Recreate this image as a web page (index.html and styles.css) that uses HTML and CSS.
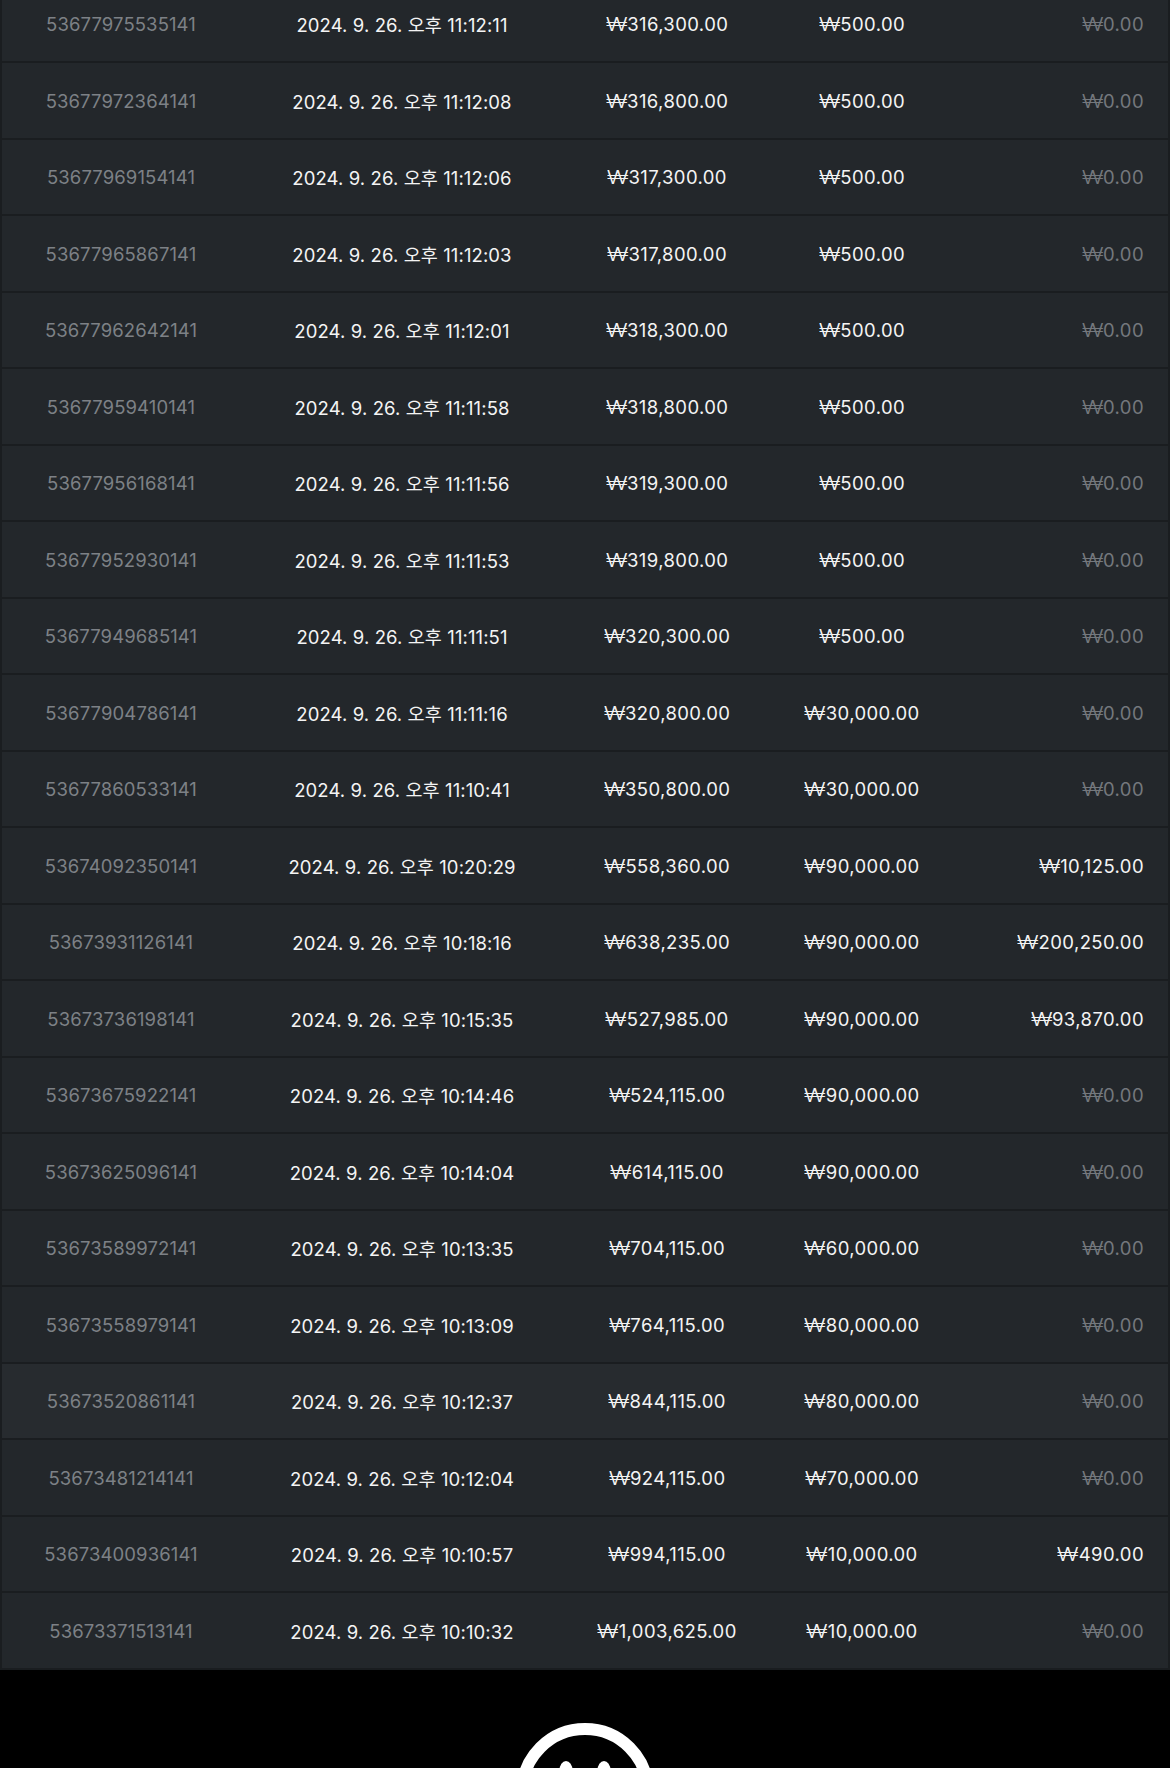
FILE: index.html
```html
<!DOCTYPE html>
<html lang="ko">
<head>
<meta charset="utf-8">
<title>Transactions</title>
<link rel="stylesheet" href="styles.css">
</head>
<body>
<main class="page">
  <section class="table">
    <div class="row"><span class="c id">53677975535141</span><span class="c date">2024. 9. 26. 오후 11:12:11</span><span class="c amt"><span class="won">₩</span>316,300.00</span><span class="c amt"><span class="won">₩</span>500.00</span><span class="c amt end zero"><span class="won">₩</span>0.00</span></div>
    <div class="row"><span class="c id">53677972364141</span><span class="c date">2024. 9. 26. 오후 11:12:08</span><span class="c amt"><span class="won">₩</span>316,800.00</span><span class="c amt"><span class="won">₩</span>500.00</span><span class="c amt end zero"><span class="won">₩</span>0.00</span></div>
    <div class="row"><span class="c id">53677969154141</span><span class="c date">2024. 9. 26. 오후 11:12:06</span><span class="c amt"><span class="won">₩</span>317,300.00</span><span class="c amt"><span class="won">₩</span>500.00</span><span class="c amt end zero"><span class="won">₩</span>0.00</span></div>
    <div class="row"><span class="c id">53677965867141</span><span class="c date">2024. 9. 26. 오후 11:12:03</span><span class="c amt"><span class="won">₩</span>317,800.00</span><span class="c amt"><span class="won">₩</span>500.00</span><span class="c amt end zero"><span class="won">₩</span>0.00</span></div>
    <div class="row"><span class="c id">53677962642141</span><span class="c date">2024. 9. 26. 오후 11:12:01</span><span class="c amt"><span class="won">₩</span>318,300.00</span><span class="c amt"><span class="won">₩</span>500.00</span><span class="c amt end zero"><span class="won">₩</span>0.00</span></div>
    <div class="row"><span class="c id">53677959410141</span><span class="c date">2024. 9. 26. 오후 11:11:58</span><span class="c amt"><span class="won">₩</span>318,800.00</span><span class="c amt"><span class="won">₩</span>500.00</span><span class="c amt end zero"><span class="won">₩</span>0.00</span></div>
    <div class="row"><span class="c id">53677956168141</span><span class="c date">2024. 9. 26. 오후 11:11:56</span><span class="c amt"><span class="won">₩</span>319,300.00</span><span class="c amt"><span class="won">₩</span>500.00</span><span class="c amt end zero"><span class="won">₩</span>0.00</span></div>
    <div class="row"><span class="c id">53677952930141</span><span class="c date">2024. 9. 26. 오후 11:11:53</span><span class="c amt"><span class="won">₩</span>319,800.00</span><span class="c amt"><span class="won">₩</span>500.00</span><span class="c amt end zero"><span class="won">₩</span>0.00</span></div>
    <div class="row"><span class="c id">53677949685141</span><span class="c date">2024. 9. 26. 오후 11:11:51</span><span class="c amt"><span class="won">₩</span>320,300.00</span><span class="c amt"><span class="won">₩</span>500.00</span><span class="c amt end zero"><span class="won">₩</span>0.00</span></div>
    <div class="row"><span class="c id">53677904786141</span><span class="c date">2024. 9. 26. 오후 11:11:16</span><span class="c amt"><span class="won">₩</span>320,800.00</span><span class="c amt"><span class="won">₩</span>30,000.00</span><span class="c amt end zero"><span class="won">₩</span>0.00</span></div>
    <div class="row"><span class="c id">53677860533141</span><span class="c date">2024. 9. 26. 오후 11:10:41</span><span class="c amt"><span class="won">₩</span>350,800.00</span><span class="c amt"><span class="won">₩</span>30,000.00</span><span class="c amt end zero"><span class="won">₩</span>0.00</span></div>
    <div class="row"><span class="c id">53674092350141</span><span class="c date">2024. 9. 26. 오후 10:20:29</span><span class="c amt"><span class="won">₩</span>558,360.00</span><span class="c amt"><span class="won">₩</span>90,000.00</span><span class="c amt end"><span class="won">₩</span>10,125.00</span></div>
    <div class="row"><span class="c id">53673931126141</span><span class="c date">2024. 9. 26. 오후 10:18:16</span><span class="c amt"><span class="won">₩</span>638,235.00</span><span class="c amt"><span class="won">₩</span>90,000.00</span><span class="c amt end"><span class="won">₩</span>200,250.00</span></div>
    <div class="row"><span class="c id">53673736198141</span><span class="c date">2024. 9. 26. 오후 10:15:35</span><span class="c amt"><span class="won">₩</span>527,985.00</span><span class="c amt"><span class="won">₩</span>90,000.00</span><span class="c amt end"><span class="won">₩</span>93,870.00</span></div>
    <div class="row"><span class="c id">53673675922141</span><span class="c date">2024. 9. 26. 오후 10:14:46</span><span class="c amt"><span class="won">₩</span>524,115.00</span><span class="c amt"><span class="won">₩</span>90,000.00</span><span class="c amt end zero"><span class="won">₩</span>0.00</span></div>
    <div class="row"><span class="c id">53673625096141</span><span class="c date">2024. 9. 26. 오후 10:14:04</span><span class="c amt"><span class="won">₩</span>614,115.00</span><span class="c amt"><span class="won">₩</span>90,000.00</span><span class="c amt end zero"><span class="won">₩</span>0.00</span></div>
    <div class="row"><span class="c id">53673589972141</span><span class="c date">2024. 9. 26. 오후 10:13:35</span><span class="c amt"><span class="won">₩</span>704,115.00</span><span class="c amt"><span class="won">₩</span>60,000.00</span><span class="c amt end zero"><span class="won">₩</span>0.00</span></div>
    <div class="row"><span class="c id">53673558979141</span><span class="c date">2024. 9. 26. 오후 10:13:09</span><span class="c amt"><span class="won">₩</span>764,115.00</span><span class="c amt"><span class="won">₩</span>80,000.00</span><span class="c amt end zero"><span class="won">₩</span>0.00</span></div>
    <div class="row hover"><span class="c id">53673520861141</span><span class="c date">2024. 9. 26. 오후 10:12:37</span><span class="c amt"><span class="won">₩</span>844,115.00</span><span class="c amt"><span class="won">₩</span>80,000.00</span><span class="c amt end zero"><span class="won">₩</span>0.00</span></div>
    <div class="row"><span class="c id">53673481214141</span><span class="c date">2024. 9. 26. 오후 10:12:04</span><span class="c amt"><span class="won">₩</span>924,115.00</span><span class="c amt"><span class="won">₩</span>70,000.00</span><span class="c amt end zero"><span class="won">₩</span>0.00</span></div>
    <div class="row"><span class="c id">53673400936141</span><span class="c date">2024. 9. 26. 오후 10:10:57</span><span class="c amt"><span class="won">₩</span>994,115.00</span><span class="c amt"><span class="won">₩</span>10,000.00</span><span class="c amt end"><span class="won">₩</span>490.00</span></div>
    <div class="row"><span class="c id">53673371513141</span><span class="c date">2024. 9. 26. 오후 10:10:32</span><span class="c amt"><span class="won">₩</span>1,003,625.00</span><span class="c amt"><span class="won">₩</span>10,000.00</span><span class="c amt end zero"><span class="won">₩</span>0.00</span></div>
  </section>
  <footer class="footer">
    <svg class="face" width="144" height="144" viewBox="0 0 144 144" aria-hidden="true">
      <circle cx="72" cy="72" r="63" fill="none" stroke="#ffffff" stroke-width="12"/>
      <ellipse cx="53" cy="50" rx="6.5" ry="9" fill="#ffffff"/>
      <ellipse cx="91" cy="50" rx="6.5" ry="9" fill="#ffffff"/>
    </svg>
  </footer>
</main>
</body>
</html>
```

FILE: styles.css
```css
html, body {
  margin: 0;
  padding: 0;
  background: #000000;
  overflow: hidden;
}

.page {
  width: 1170px;
  font-family: "Inter", "Noto Sans CJK KR", sans-serif;
}

.table {
  margin-top: -13.2px;
  background: #23272b;
  border-left: 2px solid #1a1d20;
  border-right: 2px solid #1a1d20;
}

.row {
  display: grid;
  grid-template-columns: 238px 324px 206px 184px 1fr;
  align-items: center;
  height: 74.5px;
  border-bottom: 2px solid #1a1d20;
  color: #f4f4f4;
  font-size: 18.5px;
  letter-spacing: 0.1px;
}

.row.hover {
  background: #272b2f;
}

.c {
  text-align: center;
  white-space: nowrap;
}

.amt {
  letter-spacing: 0.4px;
}

.won {
  display: inline-block;
  margin-right: 4px;
  font-weight: 300;
  transform: scaleX(1.26);
  transform-origin: left center;
}

.id {
  color: #7d8186;
}

.end {
  text-align: right;
  padding-right: 24px;
}

.zero {
  color: #74787d;
}

.footer {
  display: flex;
  justify-content: center;
  padding-top: 50px;
  height: 200px;
  background: #000000;
}
```
